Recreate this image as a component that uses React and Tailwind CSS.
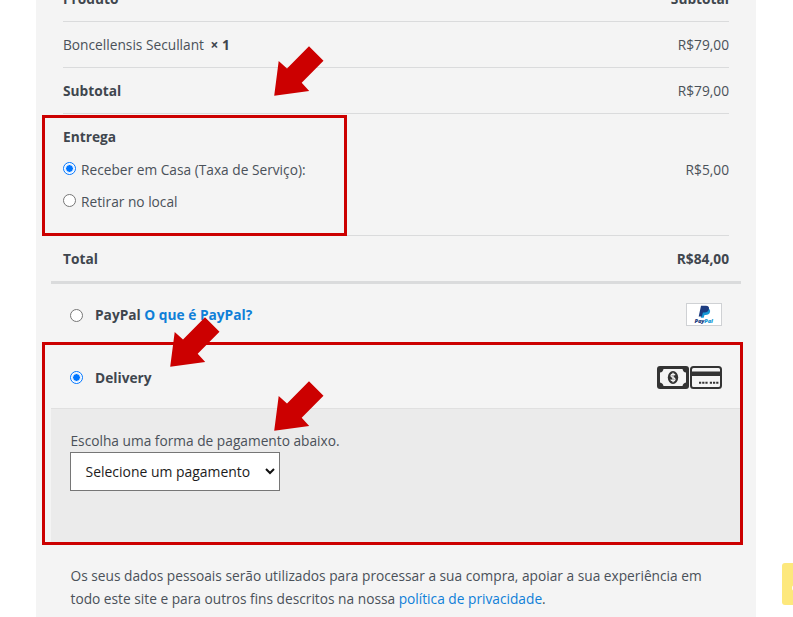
import React from "react";

function Arrow({ className }) {
  return (
    <svg className={`absolute h-[50px] w-[50px] ${className}`} viewBox="0 0 50 50" fill="#cc0000">
      <path d="M0.2 49.8 L4.7 15 L13 22.5 L35 .3 L49.5 14.7 L27.7 36.7 L35.2 44.9 Z" />
    </svg>
  );
}

function Radio({ checked, className = "" }) {
  return (
    <span
      className={`flex size-[13px] shrink-0 items-center justify-center rounded-full border bg-white ${
        checked ? "border-[#0075ff]" : "border-[#767676]"
      } ${className}`}
    >
      {checked && <span className="size-[9px] rounded-full border border-white bg-[#0075ff]" />}
    </span>
  );
}

function Row({ label, value }) {
  return (
    <div className="flex h-[46px] items-center justify-between border-b border-[#dadbdc]">
      <span>{label}</span>
      <span>{value}</span>
    </div>
  );
}

function PayPalLogo() {
  return (
    <svg className="h-[23px] w-9" viewBox="0 0 36 23">
      <rect x=".5" y=".5" width="35" height="22" fill="#fff" stroke="#cfd1d4" />
      <path d="M16.500 5.500h4.500c2.600 0 3.600 1.500 3 3.600-.6 2.200-2.200 3-4.200 3h-1.300l-.8 2.700h-2.900z" fill="#1699d6" />
      <path d="M15 2.800h4.900c2.500 0 3.600 1.400 3 3.500-.6 2.400-2.200 3.300-4.400 3.300h-1.600l-1 3.900h-3.200z" fill="#1c3c80" />
      <text x="8.500" y="19.500" fontFamily="Open Sans, sans-serif" fontSize="5.800" fontWeight="800" fontStyle="italic" textLength="18.500">
        <tspan fill="#1c3c80">Pay</tspan>
        <tspan fill="#1699d6">Pal</tspan>
      </text>
    </svg>
  );
}

function CashIcon() {
  return (
    <svg className="h-[23px] w-8" viewBox="0 0 32 23">
      <rect width="32" height="23" rx="3" fill="#333" />
      <path d="M6.500 3h19c.3 2 1.500 3.200 3.500 3.600v9.800c-2 .4-3.200 1.600-3.500 3.600h-19C6.200 18 5 16.800 3 16.400V6.600C5 6.200 6.200 5 6.500 3z" fill="#f4f4f4" />
      <ellipse cx="16" cy="11.500" rx="5.200" ry="6.500" fill="#333" />
      <path d="M18 9.300c-.4-.8-1-1.100-2-1.100-2.500 0-2.700 2.700-.3 3.200 3.100.6 2.900 3.500.3 3.500-1.100 0-1.900-.4-2.300-1.300M16 6.700v9.600" fill="none" stroke="#f4f4f4" strokeWidth="1.300" />
    </svg>
  );
}

function CardIcon() {
  return (
    <svg className="h-[23px] w-8" viewBox="0 0 32 23">
      <rect x="1" y="1" width="30" height="21" rx="2.500" fill="#f4f4f4" stroke="#333" strokeWidth="2" />
      <path d="M1 5.500h30v4.500H1z" fill="#333" />
      <path d="M9 16.800h9M19.800 16.800h9" stroke="#333" strokeWidth="2" strokeDasharray="2.200 1" />
    </svg>
  );
}

export default function App() {
  return (
    <div className="relative h-[617px] w-[793px] overflow-hidden bg-white font-['Open_Sans',sans-serif] text-[13.72px] leading-[23px] text-[#4a5159]">
      <div className="ml-9 flow-root h-full w-[720px] bg-[#f4f4f4] px-[15px]">
        <div className="px-3">
          <div className="-mt-[25px] flex h-[47px] items-center justify-between border-b border-[#dadbdc] font-bold text-[#3f464e]">
            <span>Produto</span>
            <span>Subtotal</span>
          </div>
          <Row label={<>Boncellensis Secullant <b className="ml-[3px] text-[#3f464e]">× 1</b></>} value="R$79,00" />
          <Row label={<b className="text-[#3f464e]">Subtotal</b>} value="R$79,00" />
          <div className="h-[122px] border-b border-[#dadbdc] pt-[11px]">
            <b className="block text-[#3f464e]">Entrega</b>
            <div className="mt-[10px] flex justify-between">
              <div className="flex">
                <Radio checked className="mt-1 mr-[5px]" />
                Receber em Casa (Taxa de Serviço):
              </div>
              <span>R$5,00</span>
            </div>
            <div className="mt-[9px] flex">
              <Radio className="mt-1 mr-[5px]" />
              Retirar no local
            </div>
          </div>
          <div className="flex h-[45px] items-center justify-between font-bold text-[#3f464e]">
            <span>Total</span>
            <span>R$84,00</span>
          </div>
        </div>
        <div className="h-[3px] bg-[#dadbdc]" />
        <div className="flex h-[61px] items-center justify-between px-[19px]">
          <div className="flex items-center font-bold text-[#3f464e]">
            <Radio className="mt-px mr-3" />
            <span>PayPal <span className="text-[#0f7fd8]">O que é PayPal?</span></span>
          </div>
          <PayPalLogo />
        </div>
        <div className="flex h-16 items-center justify-between border-b border-[#e0e0e0] px-[19px] pt-0.5">
          <div className="flex items-center font-bold text-[#3f464e]">
            <Radio checked className="mr-3" />
            Delivery
          </div>
          <div className="flex gap-px">
            <CashIcon />
            <CardIcon />
          </div>
        </div>
        <div className="h-[133px] bg-[#ebebeb] pt-5 pl-[19px]">
          <p className="pl-[0.5px]">Escolha uma forma de pagamento abaixo.</p>
          <div className="flex h-[39px] w-[210px] items-center justify-between border border-[#767676] bg-white pr-1 pl-[14.5px] text-[13.95px] text-[#1c1c1c]">
            <span>Selecione um pagamento</span>
            <svg className="h-[7px] w-[10px]" viewBox="0 0 10 7" fill="none" stroke="#111" strokeWidth="2">
              <path d="M1 1l4 4 4-4" />
            </svg>
          </div>
        </div>
        <p className="mt-[22px] pl-[19.5px] whitespace-nowrap">
          Os seus dados pessoais serão utilizados para processar a sua compra, apoiar a sua experiência em
          <br />
          todo este site e para outros fins descritos na nossa <span className="text-[#0f7fd8]">política de privacidade</span>.
        </p>
      </div>

      <div className="absolute top-[115px] left-[42px] h-[121px] w-[305px] border-3 border-[#cc0000]" />
      <div className="absolute top-[342px] left-[42px] h-[203px] w-[701px] border-3 border-[#cc0000]" />
      <Arrow className="top-[46px] left-[274px]" />
      <Arrow className="top-[317px] left-[170px]" />
      <Arrow className="top-[381px] left-[274px]" />
      <div className="absolute top-[563px] left-[782px] h-[42px] w-5 rounded-[3px] bg-[#fde87c]">
        <span className="absolute top-[22px] left-[10px] size-[6px] rounded-full bg-white" />
      </div>
    </div>
  );
}
